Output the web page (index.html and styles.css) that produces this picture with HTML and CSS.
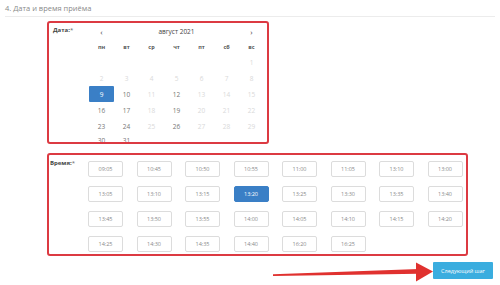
FILE: index.html
```html
<!DOCTYPE html>
<html lang="ru">
<head>
  <meta charset="UTF-8">
  <title>Дата и время приёма</title>
  <link rel="stylesheet" href="styles.css">
</head>
<body>

<div class="page">
  <div class="step-title">4. Дата и время приёма</div>

  <div class="field-box date-box">
    <div class="field-label">Дата:<span class="req">*</span></div>
    <div class="calendar">
      <div class="cal-head">
        <span class="cal-nav">‹</span>
        <span class="cal-month">август 2021</span>
        <span class="cal-nav">›</span>
      </div>
      <div class="cal-grid">
        <span class="wd">пн</span><span class="wd">вт</span><span class="wd">ср</span><span class="wd">чт</span><span class="wd">пт</span><span class="wd">сб</span><span class="wd">вс</span>

        <span></span><span></span><span></span><span></span><span></span><span></span><span class="day off">1</span>
        <span class="day off">2</span><span class="day off">3</span><span class="day off">4</span><span class="day off">5</span><span class="day off">6</span><span class="day off">7</span><span class="day off">8</span>
        <span class="day selected">9</span><span class="day">10</span><span class="day off">11</span><span class="day">12</span><span class="day off">13</span><span class="day off">14</span><span class="day off">15</span>
        <span class="day">16</span><span class="day">17</span><span class="day off">18</span><span class="day">19</span><span class="day off">20</span><span class="day off">21</span><span class="day off">22</span>
        <span class="day">23</span><span class="day">24</span><span class="day off">25</span><span class="day">26</span><span class="day off">27</span><span class="day off">28</span><span class="day off">29</span>
        <span class="day last">30</span><span class="day last">31</span>
      </div>
    </div>
  </div>

  <div class="field-box time-box">
    <div class="field-label">Время:<span class="req">*</span></div>
    <div class="slots">
      <span class="slot">09:05</span><span class="slot">10:45</span><span class="slot">10:50</span><span class="slot">10:55</span>
      <span class="slot">11:00</span><span class="slot">11:05</span><span class="slot">13:10</span><span class="slot">13:00</span>
      <span class="slot">13:05</span><span class="slot">13:10</span><span class="slot">13:15</span><span class="slot active">13:20</span>
      <span class="slot">13:25</span><span class="slot">13:30</span><span class="slot">13:35</span><span class="slot">13:40</span>
      <span class="slot">13:45</span><span class="slot">13:50</span><span class="slot">13:55</span><span class="slot">14:00</span>
      <span class="slot">14:05</span><span class="slot">14:10</span><span class="slot">14:15</span><span class="slot">14:20</span>
      <span class="slot">14:25</span><span class="slot">14:30</span><span class="slot">14:35</span><span class="slot">14:40</span>
      <span class="slot">16:20</span><span class="slot">16:25</span>
    </div>
  </div>

  <div class="actions">
    <svg class="arrow" width="160" height="22" viewBox="0 0 160 22">
      <polygon points="0,12.3 146,7 146,11.8 0,14" fill="#e0312f"/>
      <polygon points="143,0.5 160,9.5 143,19.5" fill="#e0312f"/>
    </svg>
    <button class="next-button" type="button">Следующий шаг</button>
  </div>
</div>

</body>
</html>
```

FILE: styles.css
```css
body {
  margin: 0;
  background: #fff;
  font-family: "Open Sans", "Liberation Sans", sans-serif;
  color: #555;
}

.page {
  width: 500px;
  height: 285px;
  overflow: hidden;
}

.step-title {
  margin: 0 5px;
  padding-top: 4px;
  height: 12px;
  font-size: 7.5px;
  line-height: 9px;
  color: #8a8a8a;
  border-bottom: 1px solid #ececec;
}

.field-box {
  margin-left: 47px;
  border: 2px solid #dc3a42;
  border-radius: 3px;
  display: flex;
  box-sizing: border-box;
  overflow: hidden;
}

.field-label {
  font-size: 6px;
  font-weight: bold;
  color: #444;
  line-height: 8px;
}

.req {
  font-weight: normal;
  color: #666;
}

.date-box {
  margin-top: 4px;
  width: 222px;
  height: 123px;
}

.date-box .field-label {
  width: 40px;
  padding: 3px 0 0 4px;
  box-sizing: border-box;
}

.calendar {
  width: 175px;
}

.cal-head {
  height: 16px;
  display: flex;
  align-items: center;
  font-size: 6.5px;
  color: #444;
}

.cal-nav {
  width: 25px;
  text-align: center;
  font-size: 8px;
}

.cal-month {
  flex: 1;
  text-align: center;
}

.cal-grid {
  display: grid;
  grid-template-columns: repeat(7, 25px);
  grid-auto-rows: 16px;
  grid-template-rows: 15px;
}

.cal-grid span {
  display: flex;
  align-items: center;
  justify-content: center;
  font-size: 6.5px;
}

.cal-grid .wd {
  font-size: 5.5px;
  font-weight: bold;
  color: #555;
}

.day {
  color: #777;
}

.day.off {
  color: #d9d9d9;
}

.cal-grid .day.last {
  align-items: flex-start;
  padding-top: 2px;
}

.day.selected {
  background: #3a7fc6;
  color: #fff;
  border-radius: 1px;
}

.time-box {
  margin-top: 9px;
  width: 421px;
  height: 103px;
}

.time-box .field-label {
  width: 39px;
  padding: 4px 0 0 1px;
  box-sizing: border-box;
}

.slots {
  padding-top: 6px;
  display: grid;
  grid-template-columns: repeat(8, 35px);
  grid-auto-rows: 16px;
  column-gap: 13.5px;
  row-gap: 9px;
}

.slot {
  border: 1px solid #dcdcdc;
  border-radius: 2px;
  display: flex;
  align-items: center;
  justify-content: center;
  font-size: 5.5px;
  color: #8a8a8a;
}

.slot.active {
  background: #3a7fc6;
  border-color: #3a7fc6;
  color: #fff;
}

.actions {
  margin-top: 6px;
  padding-right: 7px;
  display: flex;
  justify-content: flex-end;
  align-items: flex-start;
}

.arrow {
  display: block;
}

.next-button {
  width: 60px;
  height: 17px;
  padding: 0;
  border: none;
  border-radius: 1px;
  background: #3aaddf;
  color: #fff;
  font-family: "Open Sans", "Liberation Sans", sans-serif;
  font-size: 5.5px;
}
```
